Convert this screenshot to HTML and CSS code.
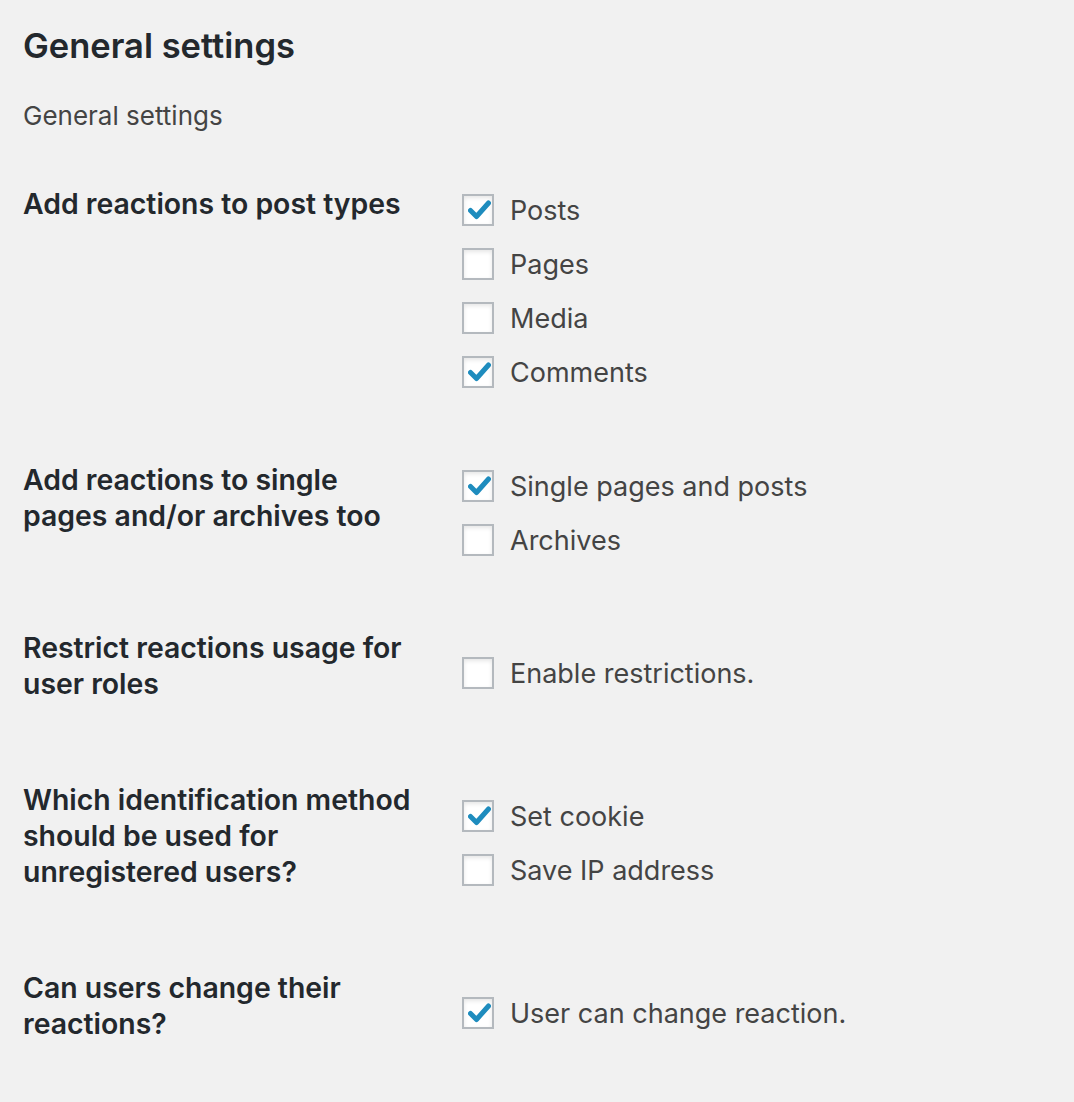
FILE: index.html
```html
<!DOCTYPE html>
<html lang="en">
<head>
<meta charset="utf-8">
<title>General settings</title>
<link rel="stylesheet" href="styles.css">
</head>
<body>
<div class="wrap">
  <h1 class="title">General settings</h1>
  <p class="desc">General settings</p>
  <div class="form">
    <div class="th">Add reactions to post types</div>
    <div class="td">
      <label class="opt"><span class="cb on"></span><span>Posts</span></label>
      <label class="opt"><span class="cb"></span><span>Pages</span></label>
      <label class="opt"><span class="cb"></span><span>Media</span></label>
      <label class="opt"><span class="cb on"></span><span>Comments</span></label>
    </div>

    <div class="th">Add reactions to single pages and/or archives too</div>
    <div class="td">
      <label class="opt"><span class="cb on"></span><span>Single pages and posts</span></label>
      <label class="opt"><span class="cb"></span><span>Archives</span></label>
    </div>

    <div class="th">Restrict reactions usage for user roles</div>
    <div class="td">
      <label class="opt"><span class="cb"></span><span>Enable restrictions.</span></label>
    </div>

    <div class="th">Which identification method should be used for unregistered users?</div>
    <div class="td">
      <label class="opt"><span class="cb on"></span><span>Set cookie</span></label>
      <label class="opt"><span class="cb"></span><span>Save IP address</span></label>
    </div>

    <div class="th">Can users change their reactions?</div>
    <div class="td">
      <label class="opt"><span class="cb on"></span><span>User can change reaction.</span></label>
    </div>
  </div>
</div>
</body>
</html>
```

FILE: styles.css
```css
html, body {
  margin: 0;
  padding: 0;
  background: #f1f1f1;
}
body {
  font-family: Inter, "Noto Sans", sans-serif;
  color: #444;
}
.wrap {
  padding: 0 0 0 23px;
}
.title {
  margin: 0;
  padding-top: 25px;
  font-size: 34.5px;
  line-height: 42px;
  font-weight: 600;
  color: #23282d;
}
.desc {
  margin: 0;
  padding-top: 31px;
  font-size: 26px;
  line-height: 36px;
  color: #444;
}
.form {
  display: grid;
  grid-template-columns: 400px 1fr;
  margin-top: 12px;
}
.th {
  align-self: start;
  padding: 40px 8px 40px 0;
  font-size: 28.4px;
  line-height: 36px;
  font-weight: 600;
  color: #23282d;
}
.td {
  align-self: center;
  padding: 30px 0 30px 39px;
  display: flex;
  flex-direction: column;
}
.opt {
  height: 40px;
  padding-top: 14px;
  display: flex;
  align-items: center;
  gap: 16px;
  font-size: 27px;
  color: #444;
}
.cb {
  box-sizing: border-box;
  width: 32px;
  height: 32px;
  border: 2px solid #b4b9be;
  background: #fff;
  box-shadow: inset 0 2px 4px rgba(0,0,0,0.1);
  position: relative;
  flex: none;
}
.cb.on::after {
  content: "";
  position: absolute;
  left: 4px;
  top: 4px;
  width: 23px;
  height: 20px;
  background: no-repeat center/contain url("data:image/svg+xml;utf8,<svg xmlns='http://www.w3.org/2000/svg' viewBox='0 0 23 20'><path d='M2.5 10.5 L8.5 16.5 L20.5 3' fill='none' stroke='%231e8cbe' stroke-width='5' stroke-linecap='round' stroke-linejoin='round'/></svg>");
}
```
